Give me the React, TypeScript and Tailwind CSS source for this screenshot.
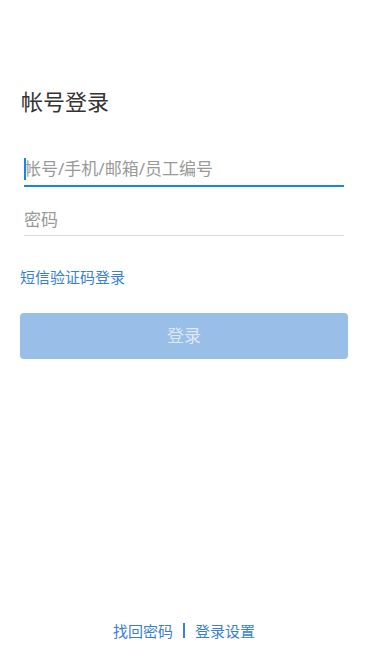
import React, { useState } from 'react';

const App: React.FC = () => {
  const [account, setAccount] = useState('');
  const [password, setPassword] = useState('');

  return (
    <div
      className="min-h-[661px] bg-white flex flex-col pl-5 pr-[21px]"
      style={{ fontFamily: '"Noto Sans", "Noto Sans CJK SC", sans-serif' }}
    >
      {/* 标题 */}
      <h1 className="mt-[86px] text-[22px] leading-[30px] text-[#333333] pl-px">帐号登录</h1>

      {/* 表单 */}
      <div className="mx-1 mt-[39px]">
        <div className="relative">
          <input
            type="text"
            autoFocus
            value={account}
            onChange={(e) => setAccount(e.target.value)}
            placeholder="帐号/手机/邮箱/员工编号"
            className="w-full h-[32px] pb-[3px] text-[17px] text-[#333] placeholder-[#999999] caret-[#1a85e8] border-b-2 border-[#1a85e8] outline-none bg-transparent"
          />
          {account === '' && (
            <span className="absolute left-0 top-[3px] w-[2px] h-[22px] bg-[#1a85e8] pointer-events-none" />
          )}
        </div>
        <input
          type="password"
          value={password}
          onChange={(e) => setPassword(e.target.value)}
          placeholder="密码"
          className="w-full h-[49px] pt-[17px] text-[17px] text-[#333] placeholder-[#999999] border-b border-[#d9d9d9] outline-none bg-transparent"
        />
      </div>

      <a href="#" className="mt-[31px] text-[15px] leading-5 text-[#3a80d2] self-start">
        短信验证码登录
      </a>

      <button
        type="button"
        disabled
        className="mt-[26px] h-[46px] w-full rounded-[4px] bg-[#99bee8] text-[17px] text-[#dce8f6]"
      >
        登录
      </button>

      {/* 底部链接 */}
      <div className="mt-auto mb-[19px] flex items-center justify-center gap-[10px] text-[15px] text-[#3a80d2]">
        <a href="#">找回密码</a>
        <span className="w-[2px] h-[15px] bg-[#3a80d2]" />
        <a href="#">登录设置</a>
      </div>
    </div>
  );
};

export default App;
